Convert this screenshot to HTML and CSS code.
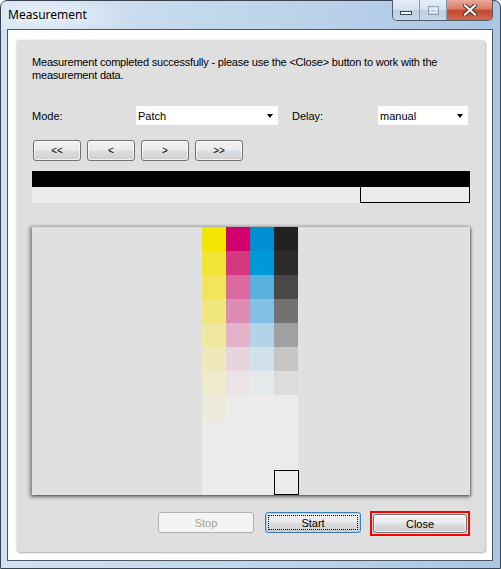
FILE: index.html
```html
<!DOCTYPE html>
<html lang="en">
<head>
    <meta charset="UTF-8">
    <meta name="viewport" content="width=device-width, initial-scale=1.0">
    <title>Measurement</title>
    <link rel="stylesheet" href="styles.css">
</head>
<body>
    <div class="window">
        <div class="titlebar">
            <span class="title">Measurement</span>
            <div class="caption-buttons">
                <span class="cap cap-min">
                    <svg width="12" height="4" viewBox="0 0 12 4"><rect x="0.5" y="0.5" width="11" height="3" fill="#fff" stroke="#3d4a5a"/></svg>
                </span>
                <span class="cap cap-max">
                    <svg width="11" height="9" viewBox="0 0 11 9"><rect x="0.5" y="0.5" width="10" height="8" fill="none" stroke="#8fa2b8"/><rect x="2.5" y="2.5" width="6" height="4" fill="none" stroke="#e8eef5"/></svg>
                </span>
                <span class="cap cap-close">
                    <svg width="14" height="12" viewBox="0 0 14 12">
                        <path d="M2 1.5 L12 10.5 M12 1.5 L2 10.5" stroke="#4a2a24" stroke-width="4.2" stroke-linecap="square"/>
                        <path d="M2 1.5 L12 10.5 M12 1.5 L2 10.5" stroke="#fff" stroke-width="2.2" stroke-linecap="square"/>
                    </svg>
                </span>
            </div>
        </div>

        <div class="client">
            <div class="panel">
                <p class="message">Measurement completed successfully - please use the &lt;Close&gt; button to work with the<br>measurement data.</p>

                <div class="settings">
                    <span class="field-label">Mode:</span>
                    <div class="combo combo-mode"><span>Patch</span><i class="arrow"></i></div>
                    <span class="field-label delay-label">Delay:</span>
                    <div class="combo combo-delay"><span>manual</span><i class="arrow"></i></div>
                </div>

                <div class="nav">
                    <button class="btn nav-btn">&lt;&lt;</button>
                    <button class="btn nav-btn">&lt;</button>
                    <button class="btn nav-btn">&gt;</button>
                    <button class="btn nav-btn">&gt;&gt;</button>
                </div>

                <div class="strip">
                    <div class="strip-top"></div>
                    <div class="strip-bottom"><div class="strip-marker"></div></div>
                </div>

                <div class="chart">
                    <div class="patches">
                        <div class="patch-grid" id="patchGrid"></div>
                        <div class="patch-current"></div>
                    </div>
                </div>

                <div class="actions">
                    <button class="btn action-btn" disabled>Stop</button>
                    <button class="btn action-btn focused">Start</button>
                    <span class="default-frame"><button class="btn close-btn">Close</button></span>
                </div>
            </div>
        </div>
    </div>

    <script>
        // Measured tone steps per channel (on screen: Y, M, C, K)
        const patchRows = [
            ['#f3e500', '#d0006f', '#008fd0', '#222222'],
            ['#f2e434', '#d4387f', '#0099d7', '#2c2c2c'],
            ['#f2e45b', '#d96a9f', '#5ab1de', '#484848'],
            ['#f1e57e', '#dd8db4', '#84c0e3', '#727272'],
            ['#f0e8a0', '#e4b2c9', '#b3d4e8', '#a0a0a0'],
            ['#efe8bc', '#e8d4dd', '#d0e1e9', '#c6c6c5'],
            ['#eeeacc', '#eae4e6', '#e4e9ea', '#dcdcdb'],
            ['#edeadb', '#ecebea', '#ecebea', '#ecebe9']
        ];

        const grid = document.getElementById('patchGrid');
        patchRows.forEach(row => {
            row.forEach(color => {
                const cell = document.createElement('div');
                cell.className = 'patch';
                cell.style.background = color;
                grid.appendChild(cell);
            });
        });
    </script>
</body>
</html>
```

FILE: styles.css
```css
:root {
    --frame-dark: #3a4451;
    --panel-bg: #dfdfdf;
    --patch-bg: #ecebe9;
    --text-color: #000;
}

body {
    margin: 0;
    background: #fff;
}

.window {
    width: 501px;
    height: 569px;
    box-sizing: border-box;
    display: flex;
    flex-direction: column;
    border: 1px solid var(--frame-dark);
    border-radius: 7px 7px 0 0;
    background: linear-gradient(90deg, #d3e2f2 0%, #c2d7ec 45%, #aac6e3 100%);
}

/* Title bar */
.titlebar {
    height: 28px;
    display: flex;
    justify-content: space-between;
    align-items: flex-start;
    background: radial-gradient(ellipse 90px 22px at 45px 14px, rgba(255, 255, 255, 0.55), rgba(255, 255, 255, 0));
}

.title {
    margin: 6px 0 0 7px;
    font-family: "Noto Sans", "Open Sans", sans-serif;
    font-size: 12px;
    line-height: 16px;
    color: #000;
}

.caption-buttons {
    display: flex;
    margin: -1px 7px 0 0;
    height: 20px;
    border: 1px solid #4d5b6b;
    border-top: none;
    border-radius: 0 0 5px 5px;
    overflow: hidden;
}

.cap {
    display: flex;
    align-items: center;
    justify-content: center;
}

.cap-min,
.cap-max {
    width: 26px;
    background: linear-gradient(#e6edf5 0%, #d7e3ef 48%, #bccee2 52%, #c9d8e9 100%);
    border-right: 1px solid #8797ab;
}

.cap-min svg {
    margin-top: 5px;
}

.cap-close {
    width: 45px;
    background: linear-gradient(#e9aa9c 0%, #d87b66 46%, #c64631 52%, #d4684f 100%);
}

/* Client area */
.client {
    flex: 1;
    margin: 0 7px 7px 6px;
    padding: 10px 7px 8px 9px;
    border: 1px solid #4e5966;
    background: #fff;
    display: flex;
}

.panel {
    flex: 1;
    padding: 16px 15px 18px 15px;
    background: var(--panel-bg);
    border-radius: 3px;
    box-shadow: 1px 1px 2px rgba(0, 0, 0, 0.3), -1px 0 2px rgba(0, 0, 0, 0.12);
    font-family: "Liberation Sans", Arial, sans-serif;
    font-size: 11px;
    color: var(--text-color);
}

.message {
    margin: 0;
    line-height: 13px;
    height: 26px;
    letter-spacing: -0.2px;
}

.settings {
    margin-top: 24px;
    height: 19px;
    display: flex;
    align-items: center;
}

.field-label {
    width: 104px;
}

.delay-label {
    width: 86px;
    margin-left: 14px;
}

.combo {
    height: 19px;
    box-sizing: border-box;
    display: flex;
    align-items: center;
    padding: 0 5px 0 2px;
    background: #fff;
}

.combo-mode {
    width: 142px;
}

.combo-delay {
    width: 90px;
}

.arrow {
    margin-left: auto;
    width: 0;
    height: 0;
    border-left: 3.5px solid transparent;
    border-right: 3.5px solid transparent;
    border-top: 4px solid #000;
}

/* Buttons */
.btn {
    height: 21px;
    padding: 0;
    box-sizing: border-box;
    border: 1px solid #707070;
    border-radius: 3px;
    background: linear-gradient(#f2f2f2 0%, #ebebeb 48%, #dddddd 52%, #cfcfcf 100%);
    box-shadow: inset 0 0 0 1px rgba(255, 255, 255, 0.7);
    font-family: "Liberation Sans", Arial, sans-serif;
    font-size: 11px;
    color: #000;
}

.nav {
    margin-top: 15px;
    padding-left: 1px;
    display: flex;
    gap: 6px;
}

.nav-btn {
    width: 48px;
    font-size: 10px;
}

/* Strip of measured patches */
.strip {
    margin-top: 10px;
}

.strip-top {
    height: 16px;
    background: #000;
}

.strip-bottom {
    height: 16px;
    background: var(--patch-bg);
    display: flex;
    justify-content: flex-end;
}

.strip-marker {
    width: 110px;
    box-sizing: border-box;
    border: 1px solid #000;
    border-top-width: 0;
}

/* Patch chart */
.chart {
    margin-top: 24px;
    height: 268px;
    padding-left: 170px;
    display: flex;
    background: #e0e0e0;
    box-shadow: -1px 1px 4px 1px rgba(0, 0, 0, 0.45), 1px 1px 2px rgba(0, 0, 0, 0.35);
}

.patches {
    width: 96px;
    display: flex;
    flex-direction: column;
    background: var(--patch-bg);
}

.patch-grid {
    display: grid;
    grid-template-columns: repeat(4, 24px);
    grid-auto-rows: 24px;
}

.patch-current {
    margin-top: auto;
    margin-right: -1px;
    align-self: flex-end;
    width: 25px;
    height: 25px;
    box-sizing: border-box;
    border: 1px solid #000;
}

/* Bottom actions */
.actions {
    margin-top: 17px;
    height: 21px;
    display: flex;
    justify-content: flex-end;
    align-items: flex-start;
}

.action-btn {
    width: 96px;
    margin-left: 11px;
}

.action-btn:disabled {
    color: #a39e98;
    border-color: #adb2b5;
    background: #f4f4f4;
    box-shadow: none;
}

.focused {
    position: relative;
    border-color: #3c7fb1;
    box-shadow: inset 0 0 0 1px #a9d8f3;
}

.focused::after {
    content: "";
    position: absolute;
    inset: 2px;
    border: 1px dotted #000;
}

.default-frame {
    display: flex;
    margin: -1px 0 0 9px;
    padding: 1px;
    border: 2px solid #ff0000;
}

.close-btn {
    width: 94px;
    height: 19px;
}
```
